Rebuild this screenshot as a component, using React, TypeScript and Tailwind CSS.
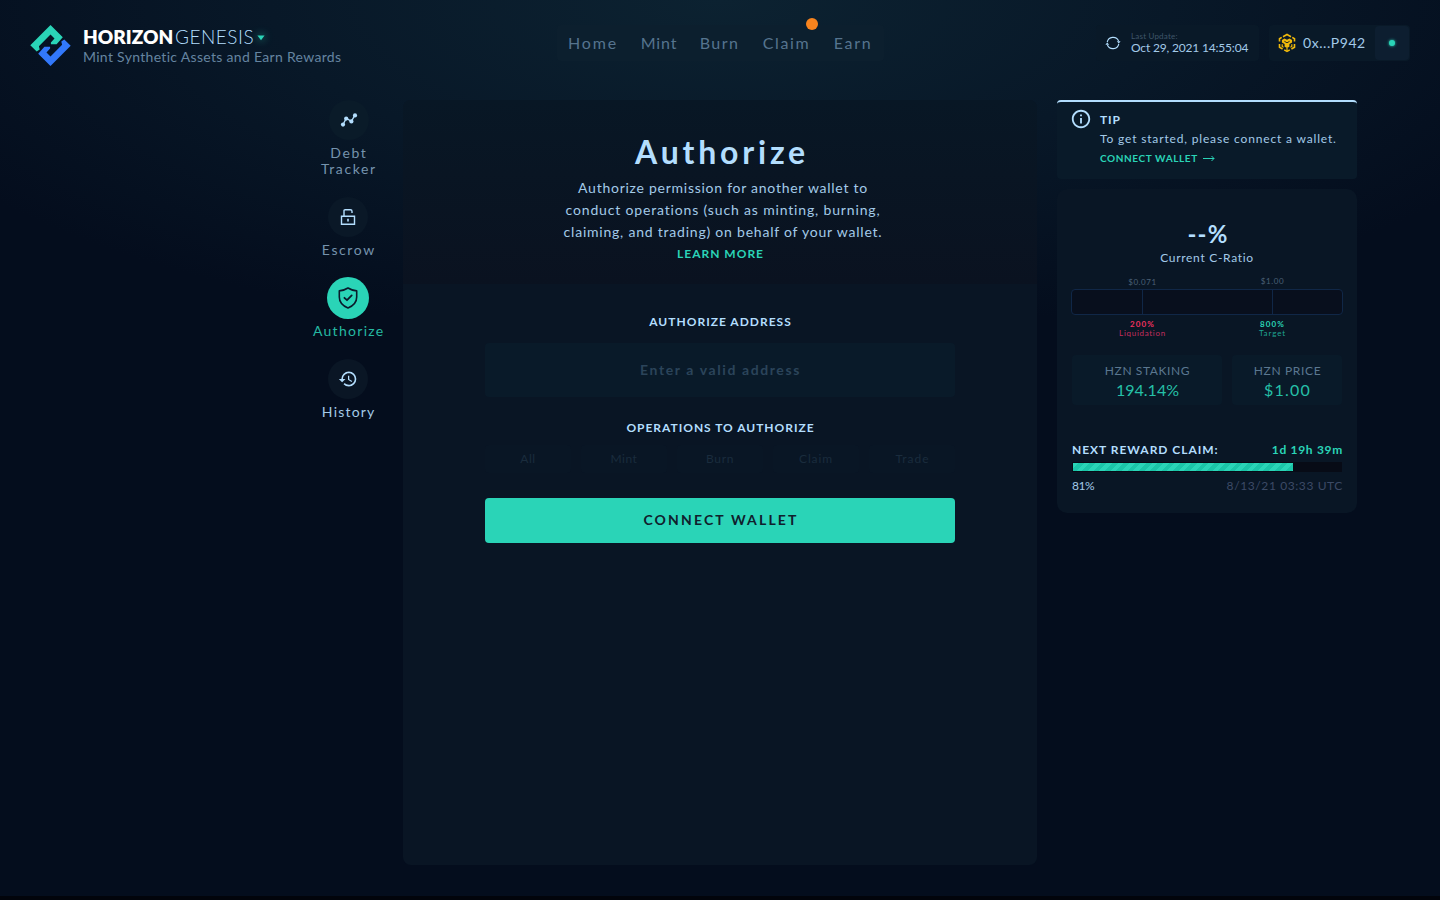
import type { ReactNode } from "react";
import { MdHistory, MdInfoOutline } from "react-icons/md";

function Logo() {
  const half = "20.2,0 32.5,12.3 26.3,19.2 20.6,19.2 20.6,17.6 24.2,13.6 20.2,9.4 8.6,21.2 9.4,24.4 6.4,26.4 0,20.2";
  return (
    <svg width="41" height="41" viewBox="0 0 40.4 41" className="ml-[30px] shrink-0">
      <polygon points={half} fill="#2ad4b7" />
      <polygon points={half} fill="#3278fa" transform="rotate(180 20.2 20.5)" />
    </svg>
  );
}

function TrackerIcon() {
  return (
    <svg width="18" height="16" viewBox="0 0 18 16" fill="#b3defe" stroke="#b3defe">
      <path d="M3 12.8 6.2 6.2 11.3 9.4 15 3.2" fill="none" strokeWidth="1.4" />
      <g stroke="none">
        <circle cx="3" cy="12.6" r="2.1" />
        <circle cx="6.2" cy="6.6" r="2.1" />
        <circle cx="11.4" cy="9.4" r="2.1" />
        <circle cx="15" cy="3.4" r="2.1" />
      </g>
    </svg>
  );
}

function LockIcon() {
  return (
    <svg width="16" height="18" viewBox="0 0 16 18" fill="none" stroke="#b3defe" strokeWidth="1.4">
      <path d="M1.5 8.2h13v8h-13z" />
      <path d="M4 8V2.8Q4 1.7 5.1 1.7h5.3Q12 1.7 12 3.2V5" />
      <path d="M8 10.8v2.8" strokeWidth="1.6" />
    </svg>
  );
}

function ShieldIcon() {
  return (
    <svg width="20" height="22" viewBox="0 0 20 22" fill="none" stroke="#0a1a2b" strokeWidth="1.6" strokeLinejoin="round" strokeLinecap="round">
      <path d="M10 1C7.6 2.6 4.5 3.6 1.3 3.9V10c0 5.2 3.6 8.9 8.7 11 5.1-2.1 8.7-5.8 8.7-11V3.9C15.5 3.6 12.4 2.6 10 1z" />
      <path d="M6.4 10.8 9 13.2 13.7 8.4" strokeWidth="1.8" />
    </svg>
  );
}

function RefreshIcon() {
  return (
    <svg width="16" height="14" viewBox="0 0 16 14" fill="none" stroke="#b3defe" strokeWidth="1.1">
      <path d="M2.2 6.2A6 6 0 0 1 13.6 5M13.8 7.8A6 6 0 0 1 2.4 9" />
      <path d="M11.8 5.2h3.8L13.8 7.6zM.4 8.8h3.8L2.2 6.4z" fill="#b3defe" stroke="none" />
    </svg>
  );
}

function ChainIcon() {
  return (
    <svg width="18" height="20" viewBox="0 0 18 20" fill="none" stroke="#f0b90b" strokeWidth="1.6">
      <path d="M5 3.7 9 1.5 13 3.7M14.3 4.4 16.5 5.7V8.6M16.5 11v3.3L13.4 16M11.8 16.9 9 18.4 6.2 16.9M4.6 16 1.5 14.3V11M1.5 8.6V5.7L3.7 4.4" />
      <path d="M3.9 6.9 6.5 5.4 9 6.8l2.5-1.4 2.6 1.5v2.6l-2.7 1.6v2.6L9 15.1l-2.4-1.4v-2.6L3.9 9.5z" fill="#f0b90b" stroke="none" />
      <path d="M4.2 11.3v2.2l1.4.8M13.8 11.3v2.2l-1.4.8M9 15v3" strokeWidth="1.2" />
      <path d="M6.4 8.3 9 9.8l2.6-1.5" stroke="#0a1a28" strokeWidth=".9" />
    </svg>
  );
}

const nav: [string, string][] = [
  ["Home", "w-[73px] tracking-[1.8px]"],
  ["Mint", "w-[59px] tracking-[0.9px]"],
  ["Burn", "w-[62px] tracking-[1.4px]"],
  ["Claim", "w-[72px] tracking-[1.6px]"],
  ["Earn", "w-[61px] tracking-[1.7px]"],
];

function SideItem({ icon, label, className, circle }: { icon: ReactNode; label: ReactNode; className: string; circle: string }) {
  return (
    <a className={`flex flex-col items-center text-center text-sm leading-4 ${className}`}>
      <span className={`flex items-center justify-center rounded-full ${circle}`}>{icon}</span>
      {label}
    </a>
  );
}

function Header() {
  return (
    <header className="grid h-[100px] grid-cols-[1fr_327px_1fr] items-start pt-[25px]">
      <div className="flex items-start">
        <Logo />
        <div className="ml-3 whitespace-nowrap">
          <div className="flex h-6 items-center text-[19px] leading-6">
            <span className="w-[92px] font-extrabold tracking-[0px] text-white">HORIZON</span>
            <span className="font-light tracking-[0.5px] text-[#b3defe]">GENESIS</span>
            <svg width="8" height="6" viewBox="0 0 8 6" className="ml-[3px] mt-0.5 drop-shadow-[0_0_4px_#2ad4b7]">
              <path d="M.4 .6h7.2L4 5.2z" fill="#2ad4b7" />
            </svg>
          </div>
          <div className="text-sm leading-[15px] tracking-[0.31px] text-[#6584a0]">Mint Synthetic Assets and Earn Rewards</div>
        </div>
      </div>
      <nav className="relative flex h-9 items-center rounded bg-[#0c1f2e] text-base text-[#56748e]">
        {nav.map(([name, cls]) => (
          <a key={name} className={`text-center font-normal ${cls}`}>{name}</a>
        ))}
        <span className="absolute left-[249.5px] top-[-7px] size-3 rounded-full bg-[#f8841e]" />
      </nav>
      <div className="flex justify-end gap-2.5 pr-[30px]">
        <div className="flex h-9 w-[163px] items-center rounded bg-[#091928] pl-[9px]">
          <RefreshIcon />
          <div className="ml-2.5 whitespace-nowrap">
            <div className="text-[8px] leading-[9px] tracking-[0.2px] text-[#3f5569]">Last Update:</div>
            <div className="text-xs leading-[14px] tracking-[-0.18px] text-[#a3cae8]">Oct 29, 2021 14:55:04</div>
          </div>
        </div>
        <div className="flex h-9 w-[141px] items-center rounded bg-[#091928] p-px pl-[9px] text-sm tracking-[0.55px] text-[#a3cae8]">
          <ChainIcon />
          <span className="ml-[7px]">0x...P942</span>
          <span className="ml-auto flex h-[34px] w-[34px] items-center justify-center rounded bg-[#0d1e30]">
            <span className="size-1.5 rounded-full bg-[#2ad4b7] shadow-[0_0_3px_#2ad4b7]" />
          </span>
        </div>
      </div>
    </header>
  );
}

function Sidebar() {
  return (
    <aside className="flex w-[90px] flex-col text-[#7593ad]">
      <SideItem
        className="h-[97px] tracking-[1.6px]"
        circle="mb-[5px] ml-0.5 size-10 bg-[#0a1b29]"
        icon={<TrackerIcon />}
        label={<span className="pl-[1.6px]">Debt<br />Tracker</span>}
      />
      <SideItem
        className="h-20 tracking-[1.6px]"
        circle="mb-[5px] size-10 bg-[#0a1827]"
        icon={<LockIcon />}
        label={<span className="pl-[1.6px]">Escrow</span>}
      />
      <SideItem
        className="h-[82px] tracking-[1.3px] text-[#25b9a2]"
        circle="mb-1 size-[42px] bg-[#2ad4b7]"
        icon={<ShieldIcon />}
        label={<span className="pl-[1.4px]">Authorize</span>}
      />
      <SideItem
        className="tracking-[1.2px] text-[#a3cae8]"
        circle="mb-[5px] size-10 bg-[#0a1625]"
        icon={<MdHistory className="size-5 text-[#b3defe]" />}
        label={<span className="pl-[1.4px]">History</span>}
      />
    </aside>
  );
}

function AuthorizePanel() {
  return (
    <main className="ml-2.5 h-[765px] w-[634px] rounded-lg bg-[#091524] text-center">
      <section className="h-[184px] rounded-t-lg bg-linear-to-b from-[#081725] to-[#0a1220] pt-8">
        <h1 className="mr-[-4px] text-[32px] font-bold leading-10 tracking-[3.8px] text-[#b3defe]">Authorize</h1>
        <div className="pt-[5px] text-sm leading-[22px] text-[#a3cae8]">
          <p className="pl-1.5 tracking-[0.74px]">Authorize permission for another wallet to</p>
          <p className="pl-1.5 tracking-[0.84px]">conduct operations (such as minting, burning,</p>
          <p className="pl-1.5 tracking-[0.78px]">claiming, and trading) on behalf of your wallet.</p>
          <a className="block pl-px text-xs font-bold leading-[22px] tracking-[1px] text-[#2ad4b7]">LEARN MORE</a>
        </div>
      </section>
      <section className="mx-auto w-[470px] pt-[30px] text-xs text-[#b3defe]">
        <h2 className="pl-px font-bold leading-4 tracking-[1px]">AUTHORIZE ADDRESS</h2>
        <div className="mt-[13px] flex h-[54px] items-center justify-center rounded bg-[#091a29] pl-px text-sm font-bold tracking-[1.6px] text-[#2b445a]">
          Enter a valid address
        </div>
        <h2 className="mt-[23px] pl-px font-bold leading-4 tracking-[0.97px]">OPERATIONS TO AUTHORIZE</h2>
        <div className="mt-[9px] grid grid-cols-5 gap-2.5 text-[#1a2c3d]">
          <span className="rounded bg-[#091625] leading-7 tracking-[0.6px]">All</span>
          <span className="rounded bg-[#091625] leading-7 tracking-[0.5px]">Mint</span>
          <span className="rounded bg-[#091625] leading-7 tracking-[0.7px]">Burn</span>
          <span className="rounded bg-[#091625] leading-7 tracking-[0.9px]">Claim</span>
          <span className="rounded bg-[#091625] pl-px leading-7 tracking-[1px]">Trade</span>
        </div>
        <button className="mt-[25px] block h-[45px] w-full rounded bg-[#2ad4b7] pb-0.5 pl-0.5 text-sm font-bold tracking-[2.15px] text-[#10202c]">
          CONNECT WALLET
        </button>
      </section>
    </main>
  );
}

function Tip() {
  return (
    <section className="flex h-[79px] rounded border-t-2 border-[#b3defe] bg-[#091a29] pl-[13px] text-[#a3cae8]">
      <MdInfoOutline className="mt-[6px] size-[22px] shrink-0 text-[#b3defe]" />
      <div className="ml-2 whitespace-nowrap pt-[7px] text-xs">
        <div className="h-[21px] font-bold leading-[21px] tracking-[0.9px] text-[#b3defe]">TIP</div>
        <div className="h-5 leading-[17px] tracking-[0.84px]">To get started, please connect a wallet.</div>
        <a className="flex items-center gap-[5px] text-[10px] font-bold leading-[17px] tracking-[0.6px] text-[#2ad4b7]">
          CONNECT WALLET
          <svg width="12" height="7" viewBox="0 0 12 7" fill="none" stroke="#2ad4b7">
            <path d="M0 3.5h11M8.5 1 11 3.5 8.5 6" />
          </svg>
        </a>
      </div>
    </section>
  );
}

function Stats() {
  return (
    <section className="mt-2.5 h-[324px] rounded-[10px] bg-[#091625] px-[15px] pt-7 text-xs text-[#a3cae8]">
      <div className="pl-0.5 pt-px text-center text-2xl font-bold leading-8 tracking-[1.2px] text-[#b3defe]">--%</div>
      <div className="text-center leading-4 tracking-[0.7px]">Current C-Ratio</div>
      <div className="-mx-px mt-[10px]">
        <div className="flex h-[13px] text-[8px] leading-[10px] text-[#4a6075]">
          <span className="w-[143px] pt-px text-center tracking-[0.6px]">$0.071</span>
          <span className="w-[117px] text-center tracking-[0.6px]">$1.00</span>
        </div>
        <div className="flex h-[26px] overflow-hidden rounded-sm border border-[#102747] bg-[#080f1d]">
          <div className="w-[71px] border-r border-[#102747]" />
          <div className="w-[130px] border-r border-[#102747]" />
        </div>
        <div className="flex pt-[5px] text-[8px] leading-[9px]">
          <div className="w-[143px] text-center text-[#c42d5d]">
            <b className="block tracking-[1.1px] text-[#f0315f]">200%</b>
            <span className="tracking-[0.7px]">Liquidation</span>
          </div>
          <div className="w-[117px] text-center text-[#1fa493]">
            <b className="block tracking-[1.1px] text-[#2ad4b7]">800%</b>
            <span className="tracking-[0.9px]">Target</span>
          </div>
        </div>
      </div>
      <div className="mt-[17px] flex gap-2.5 text-center">
        <div className="h-[50px] w-[150px] rounded bg-[#091a29] pl-px pt-2 leading-4">
          <div className="tracking-[0.6px] text-[#5b7790]">HZN STAKING</div>
          <div className="text-base leading-[21px] text-[#25c0a8]">194.14%</div>
        </div>
        <div className="h-[50px] w-[110px] rounded bg-[#091a29] pl-px pt-2 leading-4">
          <div className="tracking-[0.65px] text-[#5b7790]">HZN PRICE</div>
          <div className="text-base leading-[21px] tracking-[1.2px] text-[#25c0a8]">$1.00</div>
        </div>
      </div>
      <div className="mt-9 flex justify-between font-bold leading-[18px]">
        <span className="tracking-[0.97px] text-[#b3defe]">NEXT REWARD CLAIM:</span>
        <span className="-mr-px tracking-[0.7px] text-[#2ad4b7]">1d 19h 39m</span>
      </div>
      <div className="mt-[3px] h-[10px] bg-[#070b16] p-px">
        <div className="h-2 w-[220px] bg-[repeating-linear-gradient(135deg,#2ad4b7_0_4px,#1bc5a8_4px_8px)]" />
      </div>
      <div className="flex justify-between pt-[5px] leading-[18px]">
        <span className="tracking-[-0.4px]">81%</span>
        <span className="-mr-px tracking-[0.6px] text-[#3c4a65]">8/13/21 03:33 UTC</span>
      </div>
    </section>
  );
}

export default function App() {
  return (
    <div className="h-[900px] w-[1440px] overflow-hidden border-b-4 border-[#02040b] bg-[#040d1d] bg-[radial-gradient(ellipse_900px_340px_at_50%_0%,#0c2231_0%,#081828_50%,transparent_100%)] font-['Lato',sans-serif]">
      <Header />
      <div className="flex items-start pl-[303px]">
        <Sidebar />
        <AuthorizePanel />
        <aside className="ml-5 w-[300px]">
          <Tip />
          <Stats />
        </aside>
      </div>
    </div>
  );
}
